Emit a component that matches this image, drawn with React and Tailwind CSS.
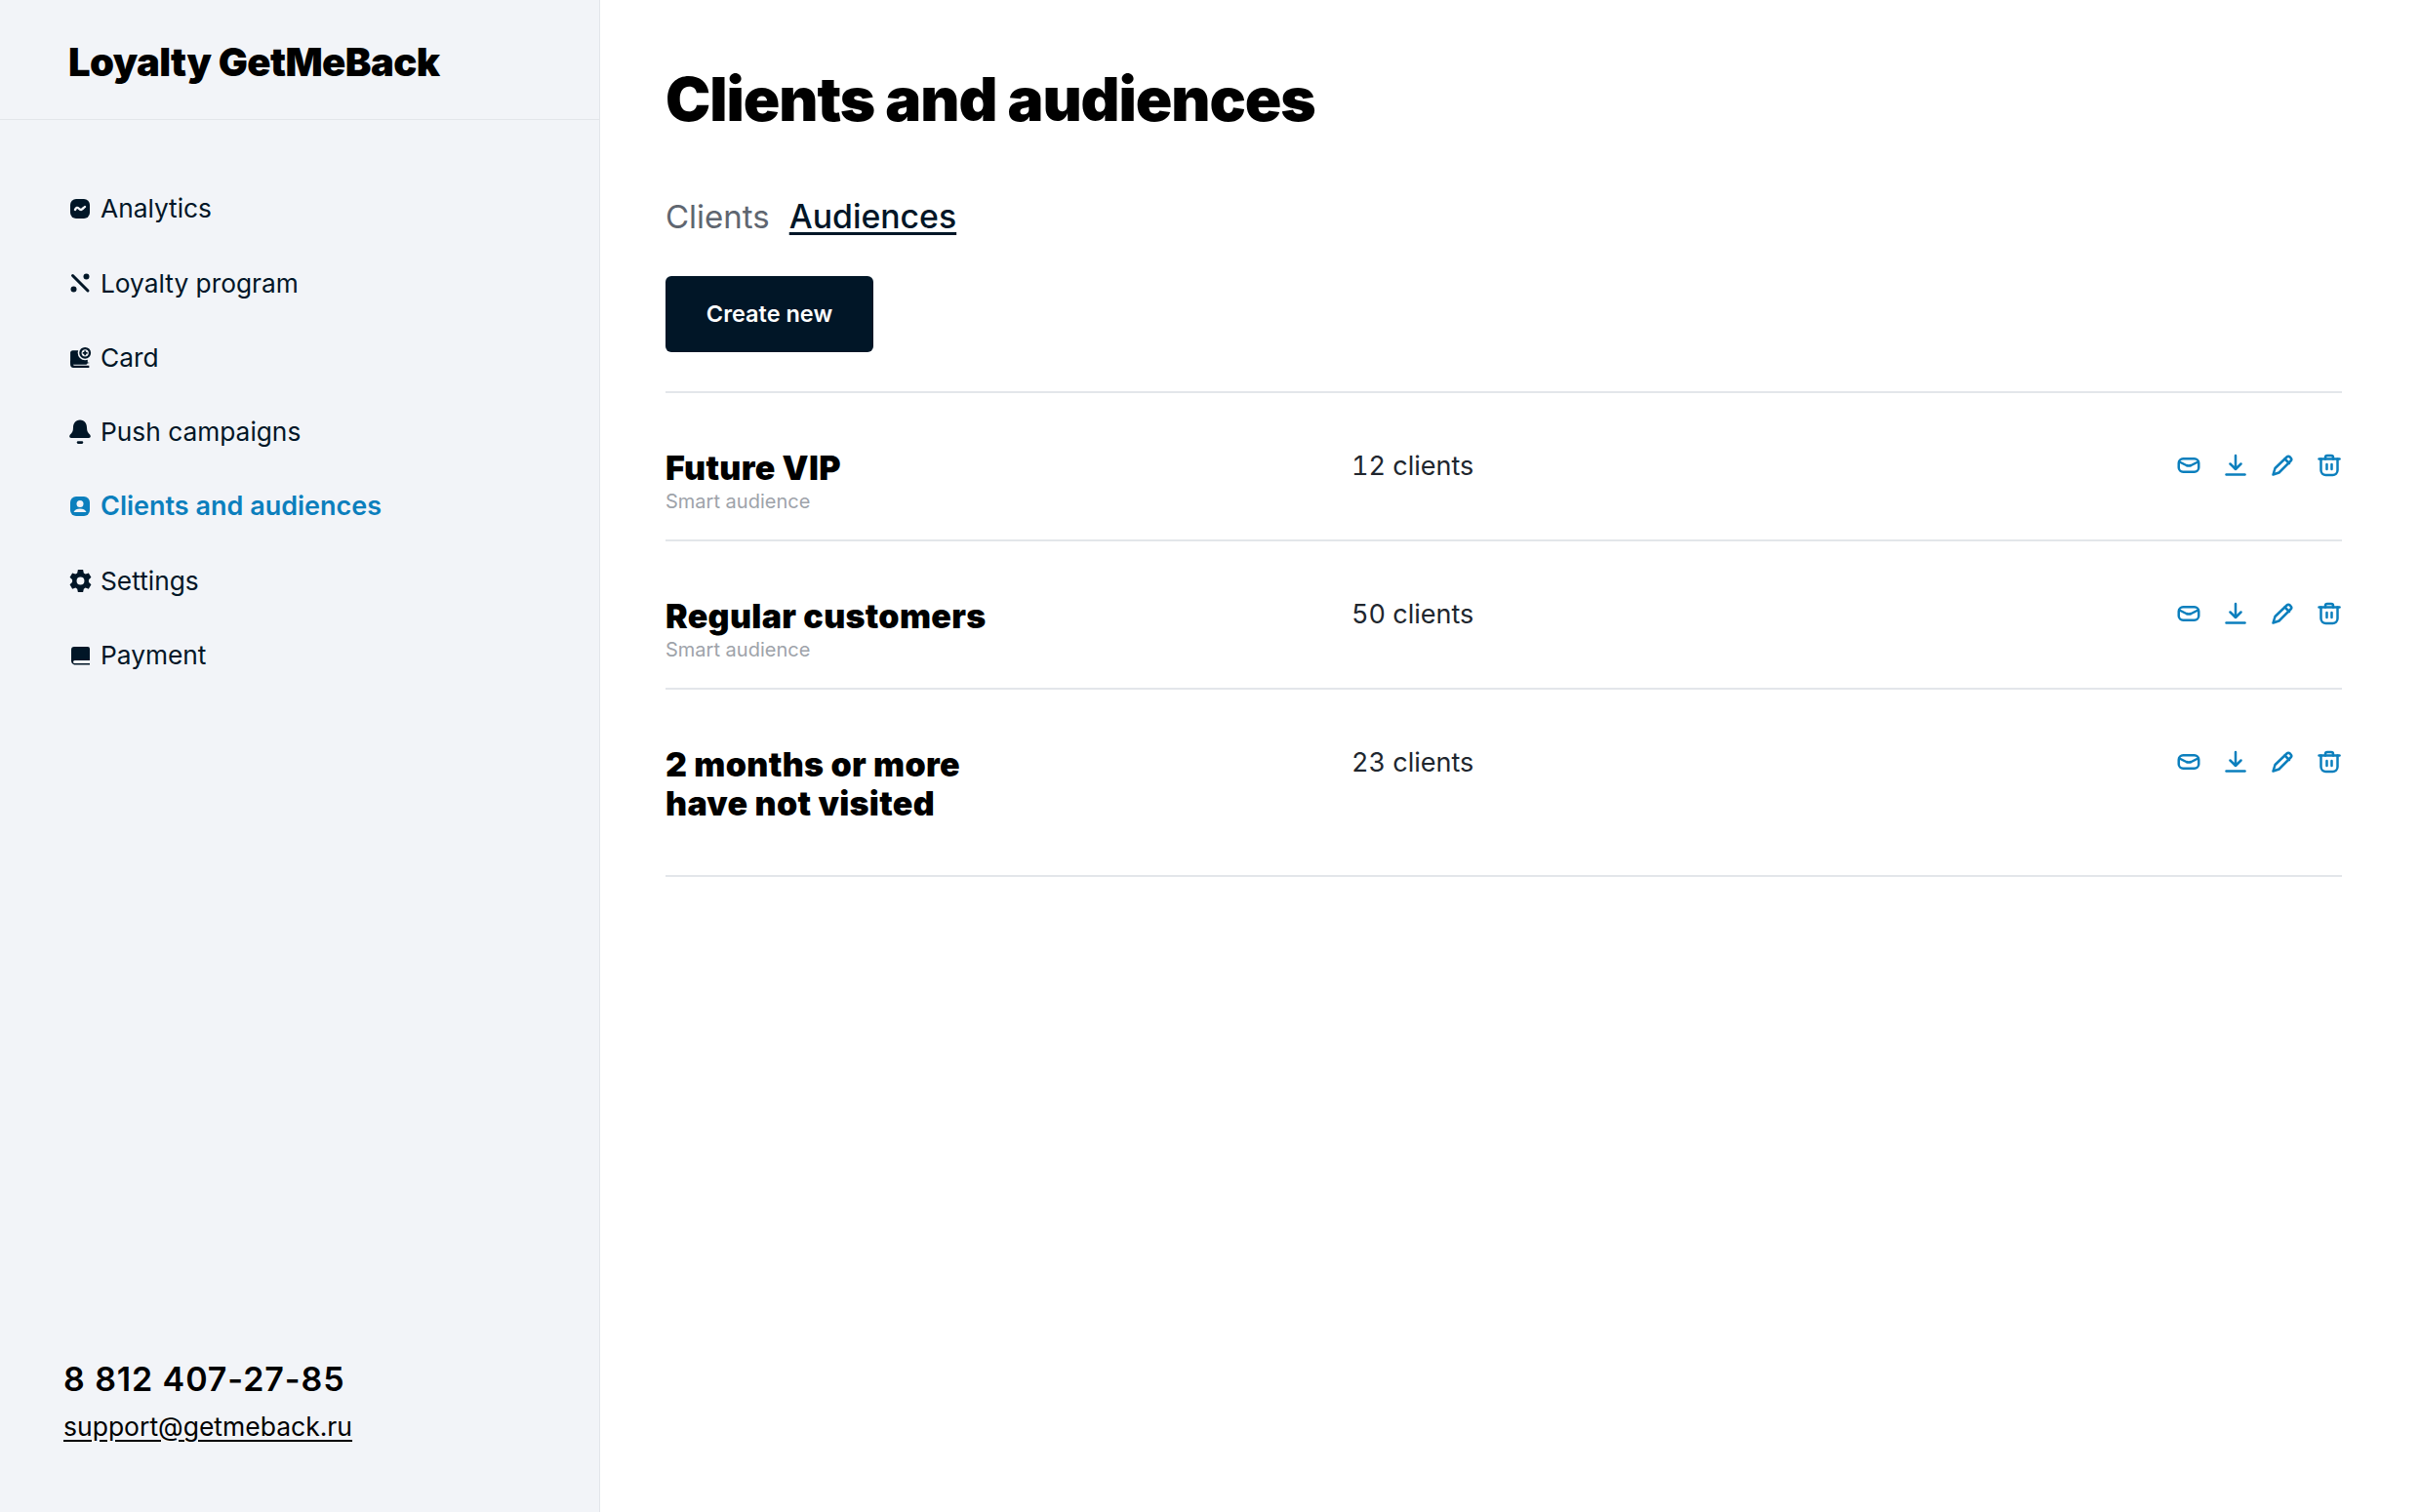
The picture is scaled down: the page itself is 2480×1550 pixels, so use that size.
import React from "react";

const navItems = [
  { name: "Analytics", icon: "analytics" },
  { name: "Loyalty program", icon: "loyalty" },
  { name: "Card", icon: "card" },
  { name: "Push campaigns", icon: "bell" },
  { name: "Clients and audiences", icon: "client", active: true },
  { name: "Settings", icon: "gear" },
  { name: "Payment", icon: "book" },
];

const audiences = [
  { id: 1, title: ["Future VIP"], note: "Smart audience", count: "12 clients" },
  { id: 2, title: ["Regular customers"], note: "Smart audience", count: "50 clients" },
  { id: 3, title: ["2 months or more", "have not visited"], count: "23 clients" },
];

const NavIcon = ({ type }) => {
  if (type === "analytics") {
    return (
      <svg viewBox="0 0 24 24" className="w-[24px] h-[24px]">
        <rect x="2" y="2" width="20" height="20" rx="6" fill="currentColor" />
        <path d="M7 13c1-2.500 2.500-2.500 3.500-1.500s2.500 2 3.500 1 2-1.500 3-2.500" fill="none" stroke="#f2f4f8" strokeWidth="2.400" strokeLinecap="round" />
      </svg>
    );
  }
  if (type === "loyalty") {
    return (
      <svg viewBox="0 0 24 24" className="w-[24px] h-[24px]">
        <path d="M4.500 4.500 20 20" stroke="currentColor" strokeWidth="3" strokeLinecap="round" />
        <circle cx="18.500" cy="5.500" r="3" fill="currentColor" />
        <circle cx="5.500" cy="18.500" r="3" fill="currentColor" />
      </svg>
    );
  }
  if (type === "card") {
    return (
      <svg viewBox="0 0 24 24" className="w-[25px] h-[25px] shrink-0">
        <rect x="2" y="5" width="17" height="14" rx="2.500" fill="currentColor" />
        <circle cx="16.500" cy="7.500" r="7.200" fill="#f2f4f8" />
        <circle cx="16.500" cy="7.500" r="4.600" fill="none" stroke="currentColor" strokeWidth="2.200" />
        <path d="M16.500 5.200v4.600M14.200 7.500h4.600" stroke="currentColor" strokeWidth="1.800" />
        <path d="M2 15v4a3 3 0 0 0 3 3h15.500v-2H6a1.200 1.200 0 0 1 0-2.400h14.500V17" fill="currentColor" />
      </svg>
    );
  }
  if (type === "bell") {
    return (
      <svg viewBox="0 0 24 24" className="w-[26px] h-[26px] shrink-0">
        <path d="M12 0.500c4.500 0 6.500 3.500 6.500 7.500 0 3 1 4.500 3 6.500 1 1.500.500 3-1.500 3H4c-2 0-2.500-1.500-1.500-3 2-2 3-3.500 3-6.500C5.500 4 7.500 0.500 12 0.500z" fill="currentColor" />
        <rect x="9" y="20.500" width="6" height="2.500" rx="1.200" fill="currentColor" />
      </svg>
    );
  }
  if (type === "client") {
    return (
      <svg viewBox="0 0 24 24" className="w-[24px] h-[24px]">
        <rect x="2" y="2" width="20" height="20" rx="6" fill="currentColor" />
        <circle cx="12" cy="9.500" r="3.500" fill="#f2f4f8" />
        <path d="M5.500 18c1-2.500 3.500-3.500 6.500-3.500s5.500 1 6.500 3.500z" fill="#f2f4f8" />
      </svg>
    );
  }
  if (type === "gear") {
    return (
      <svg viewBox="0 0 24 24" className="w-[25px] h-[25px] shrink-0">
        <path
          fillRule="evenodd"
          d="M9.500 1h5l.7 3.200 1.700 1 3.100-1 2.500 4.300-2.400 2.200v2.600l2.400 2.200-2.500 4.300-3.100-1-1.700 1-.7 3.200h-5l-.7-3.200-1.700-1-3.100 1L1.500 15.500l2.400-2.200v-2.600L1.500 8.500 4 4.200l3.100 1 1.700-1zM12 8.200a3.800 3.800 0 1 0 0 7.600 3.800 3.800 0 0 0 0-7.600z"
          fill="currentColor"
        />
      </svg>
    );
  }
  return (
    <svg viewBox="0 0 24 24" className="w-[24px] h-[24px]">
      <path d="M6 3h14a2 2 0 0 1 2 2v12H6.500a1.500 1.500 0 0 0 0 3H22v1.500H6A4 4 0 0 1 3 18V6a3 3 0 0 1 3-3z" fill="currentColor" />
    </svg>
  );
};

const ActionIcons = () => (
  <div className="flex items-center gap-[24px] mt-[5px] mr-[1px] text-[#0b7fbd]">
    <svg viewBox="0 0 24 24" className="w-[24px] h-[24px]" fill="none" stroke="currentColor" strokeWidth="2.500" strokeLinecap="round" strokeLinejoin="round">
      <rect x="1.750" y="5.250" width="20.500" height="13.500" rx="4.500" />
      <path d="M2.500 8.500 9.500 12c1.700.8 3.300.8 5 0l7-3.500" />
    </svg>
    <svg viewBox="0 0 24 24" className="w-[24px] h-[24px]" fill="none" stroke="currentColor" strokeWidth="2.500" strokeLinecap="round" strokeLinejoin="round">
      <path d="M12 2v14M6.500 10.500 12 16l5.500-5.500" />
      <path d="M2.500 21.500h19" />
    </svg>
    <svg viewBox="0 0 24 24" className="w-[24px] h-[24px]" fill="none" stroke="currentColor" strokeWidth="2.500" strokeLinecap="round" strokeLinejoin="round">
      <path d="M2.500 21.500 4.500 15 16.500 3.500c1-1 2.200-1 3.200 0l.8.800c1 1 1 2.200 0 3.200L8.500 19.500z" />
      <path d="m14.500 5.500 4.500 4.500" />
    </svg>
    <svg viewBox="0 0 24 24" className="w-[24px] h-[24px]" fill="none" stroke="currentColor" strokeWidth="2.500" strokeLinecap="round" strokeLinejoin="round">
      <path d="M1.500 5.500h21" />
      <path d="M8 5.500V4a2 2 0 0 1 2-2h4a2 2 0 0 1 2 2v1.500" />
      <path d="M3.500 5.500V17a5 5 0 0 0 5 5h7a5 5 0 0 0 5-5V5.500" />
      <path d="M9.500 11v5M14.500 11v5" />
    </svg>
  </div>
);

const App = () => {
  return (
    <div className="flex w-full h-[1550px] bg-white text-[#011627] font-['Inter','Liberation_Sans',sans-serif]">
      {/* Sidebar */}
      <aside className="flex flex-col w-[615px] h-full shrink-0 bg-[#f2f4f8] border-r border-[#e3e6ea]">
        <div className="flex items-center h-[123px] pl-[70px] pt-[6px] border-b border-[#e3e6ea]">
          <span className="text-[40px] font-black tracking-[-0.6px] text-black">Loyalty GetMeBack</span>
        </div>
        <nav className="flex flex-col gap-[36.3px] pl-[70px] pt-[71px]">
          {navItems.map((item) => (
            <a
              key={item.name}
              href="#"
              className={`flex items-center h-[40px] gap-[9px] ${
                item.active ? "text-[27px] font-semibold text-[#0b7fbd]" : "text-[26.3px] text-[#011627]"
              }`}
            >
              <span className="flex items-center justify-center w-[24px]">
                <NavIcon type={item.icon} />
              </span>
              {item.name}
            </a>
          ))}
        </nav>
        <div className="flex flex-col gap-[8px] mt-auto pl-[65px] pb-[70px]">
          <span className="text-[34px] leading-[44px] font-semibold tracking-[0.9px] text-black">8 812 407-27-85</span>
          <a href="#" className="text-[26.5px] leading-[36px] underline underline-offset-4 text-black">
            support@getmeback.ru
          </a>
        </div>
      </aside>

      {/* Main */}
      <main className="flex-1 pl-[67px] pr-[80px] pt-[62px]">
        <h1 className="text-[62px] leading-[80px] font-black tracking-[-1.1px] text-black">Clients and audiences</h1>
        <div className="flex items-center gap-[20px] mt-[58px] text-[33px] leading-[44px]">
          <span className="text-[#5f6670]">Clients</span>
          <span className="text-[33.8px] font-medium underline underline-offset-4 text-[#011627]">Audiences</span>
        </div>
        <button className="flex items-center justify-center w-[213px] h-[78px] mt-[39px] rounded-[6px] bg-[#011627] text-white text-[23.5px] font-semibold">
          Create new
        </button>
        <div className="mt-[40px] border-t-2 border-[#e3e6ea]">
          {audiences.map((row) => (
            <div key={row.id} className="flex items-start pt-[57px] border-b-2 border-[#e3e6ea] pb-[26px]">
              <div className="w-[703px]">
                {row.title.map((line) => (
                  <div key={line} className="text-[34px] leading-[40px] font-black tracking-[0.3px] text-black">
                    {line}
                  </div>
                ))}
                <div className="mt-[1px] h-[26px] text-[20px] leading-[26px] text-[#9ea3aa]">{row.note}</div>
              </div>
              <div className="flex-1 text-[27px] leading-[36px] tabular-nums text-[#20262e]">{row.count}</div>
              <ActionIcons />
            </div>
          ))}
        </div>
      </main>
    </div>
  );
};

export default App;
